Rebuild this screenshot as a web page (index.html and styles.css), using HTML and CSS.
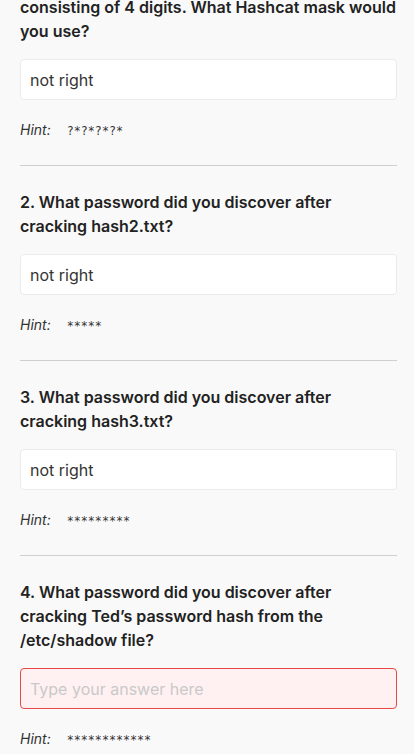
FILE: index.html
```html
<!DOCTYPE html>
<html lang="en">
<head>
<meta charset="utf-8">
<title>Quiz</title>
<link rel="stylesheet" href="styles.css">
</head>
<body>
<main class="quiz">
  <section class="q q-first">
    <p class="q-text">consisting of 4 digits. What Hashcat mask would you use?</p>
    <div class="answer">not right</div>
    <div class="hint"><span class="hint-label">Hint:</span><span class="hint-value">?*?*?*?*</span></div>
  </section>
  <section class="q">
    <p class="q-text">2. What password did you discover after cracking hash2.txt?</p>
    <div class="answer">not right</div>
    <div class="hint"><span class="hint-label">Hint:</span><span class="hint-value">*****</span></div>
  </section>
  <section class="q">
    <p class="q-text">3. What password did you discover after cracking hash3.txt?</p>
    <div class="answer">not right</div>
    <div class="hint"><span class="hint-label">Hint:</span><span class="hint-value">*********</span></div>
  </section>
  <section class="q q-last">
    <p class="q-text">4. What password did you discover after cracking Ted’s password hash from the /etc/shadow file?</p>
    <div class="answer answer-error"><span class="placeholder">Type your answer here</span></div>
    <div class="hint"><span class="hint-label">Hint:</span><span class="hint-value">************</span></div>
  </section>
</main>
</body>
</html>
```
FILE: styles.css
```css
html, body {
  margin: 0;
  padding: 0;
  background: #f9f9f9;
}
body {
  font-family: Inter, "Noto Sans", sans-serif;
  color: #222;
  height: 754px;
  overflow: hidden;
}
.quiz {
  padding: 0 17px 0 20px;
}
.q {
  border-bottom: 1px solid #cfcfcf;
  padding: 24px 0 24px;
}
.q-first {
  margin-top: -5px;
  padding-top: 0;
}
.q-last {
  border-bottom: none;
}
.q-text {
  margin: 0 0 16px;
  font-size: 16px;
  line-height: 24px;
  font-weight: 600;
  color: #222;
}
.answer {
  box-sizing: border-box;
  height: 41px;
  background: #fff;
  border: 1px solid #ebebeb;
  border-radius: 4px;
  padding: 0 9px;
  display: flex;
  align-items: center;
  font-size: 16px;
  color: #333;
}
.answer-error {
  background: #fff1f1;
  border-color: #e84848;
}
.placeholder {
  color: #c9c9c9;
}
.hint {
  margin-top: 20px;
  display: flex;
  align-items: baseline;
  gap: 16px;
  line-height: 20px;
}
.hint-label {
  font-style: italic;
  font-size: 14px;
  color: #333;
}
.hint-value {
  font-family: "DejaVu Sans Mono", "Liberation Mono", monospace;
  font-size: 11.7px;
  color: #333;
}
```
